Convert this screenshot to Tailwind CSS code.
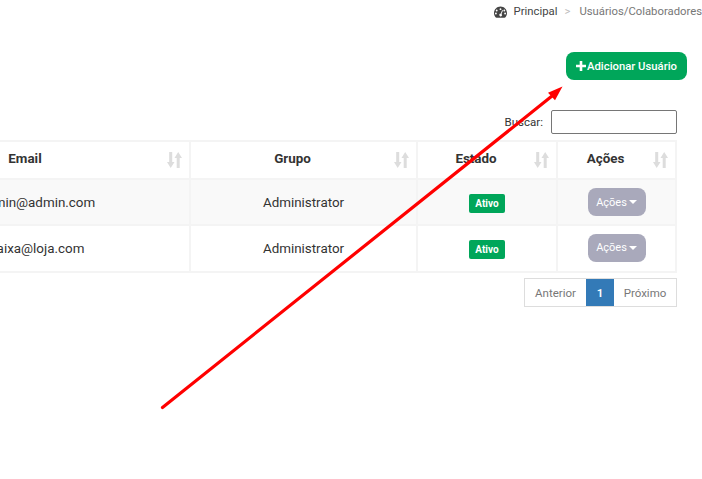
<!DOCTYPE html>
<html lang="en">
<head>
  <meta charset="UTF-8" />
  <title>Usuários/Colaboradores</title>
  <script src="https://cdn.jsdelivr.net/npm/@tailwindcss/browser@4"></script>
</head>
<body class="relative bg-white h-[479px] w-[702px] overflow-hidden font-['Roboto',sans-serif] text-[#333]">

  <!-- breadcrumb -->
  <div class="flex items-center justify-end h-6 text-[11.300px] leading-6 text-[#444] whitespace-nowrap">
    <svg class="w-[13px] h-[12px] mr-[7px] text-[#444]" viewBox="0 0 24 22" fill="currentColor"><path fill-rule="evenodd" d="M12 1C5.4 1 0 6.3 0 13c0 3 1 5.6 2.8 7.7.5.5 1 .8 1.7.8h15c.7 0 1.300-.3 1.700-.8C23 18.600 24 16 24 13 24 6.300 18.600 1 12 1zM12 4a1.700 1.700 0 110 3.400A1.700 1.700 0 0112 4zM5 6.500a1.700 1.700 0 110 3.400 1.700 1.700 0 010-3.400zm14 0a1.700 1.700 0 110 3.400 1.700 1.700 0 010-3.400zM3.500 12a1.700 1.700 0 110 3.400 1.700 1.700 0 010-3.400zm17 0a1.700 1.700 0 110 3.400 1.700 1.700 0 010-3.400zM15 7.500l1.500.6-2.600 6.500a2.500 2.500 0 11-1.500-.6L15 7.500z"/></svg>
    <span>Principal</span>
    <span class="ml-[7px] mr-[9px] text-[#bbb]">&gt;</span>
    <span class="text-[#777]">Usuários/Colaboradores</span>
  </div>

  <!-- add button -->
  <div class="flex justify-end pr-[15px] mt-[28px]">
    <button class="flex items-center justify-center gap-[1px] w-[121px] h-[28px] rounded-lg bg-[#00a65a] text-white text-[11.300px] font-medium">
      <svg class="w-[10px] h-[10px]" viewBox="0 0 10 10" fill="currentColor"><path d="M3.700 0h2.600v3.700H10v2.600H6.300V10H3.700V6.300H0V3.700h3.700z"/></svg>
      <span class="pt-[2px]">Adicionar Usuário</span>
    </button>
  </div>

  <!-- search -->
  <div class="flex justify-end items-center pr-[25px] mt-[30px] text-[11.500px]">
    <label class="mr-2 mt-[2px]">Buscar:</label>
    <input type="text" class="w-[126px] h-[24px] bg-white border border-[#767676] rounded-[2px]" />
  </div>

  <!-- table -->
  <div class="flex justify-end pr-[25px] mt-[6px]">
    <table class="shrink-0 table-fixed border-collapse border-2 border-[#f4f4f4] w-[792px] text-[13.400px] text-center">
      <colgroup>
        <col class="w-[306px]" /><col class="w-[227px]" /><col class="w-[140px]" /><col class="w-[119px]" />
      </colgroup>
      <thead>
        <tr class="h-[38px] font-semibold">
          <th class="relative border-2 border-[#f4f4f4] pr-[24px] pb-[1px]">Email
            <svg class="absolute right-[7px] top-[10px] w-[15px] h-[16px] text-[#ddd]" viewBox="0 0 15 16" fill="currentColor"><path d="M2.200 0h3v10H7.500L3.700 16 0 10h2.200zM9.700 16h3V6H15L11.200 0 7.500 6h2.200z"/></svg>
          </th>
          <th class="relative border-2 border-[#f4f4f4] pr-[22px] pb-[1px]">Grupo
            <svg class="absolute right-[7px] top-[10px] w-[15px] h-[16px] text-[#ddd]" viewBox="0 0 15 16" fill="currentColor"><path d="M2.200 0h3v10H7.500L3.700 16 0 10h2.200zM9.700 16h3V6H15L11.200 0 7.500 6h2.200z"/></svg>
          </th>
          <th class="relative border-2 border-[#f4f4f4] pr-[22px] pb-[1px]">Estado
            <svg class="absolute right-[7px] top-[10px] w-[15px] h-[16px] text-[#ddd]" viewBox="0 0 15 16" fill="currentColor"><path d="M2.200 0h3v10H7.500L3.700 16 0 10h2.200zM9.700 16h3V6H15L11.200 0 7.500 6h2.200z"/></svg>
          </th>
          <th class="relative border-2 border-[#f4f4f4] pr-[22px] pb-[1px]">Ações
            <svg class="absolute right-[7px] top-[10px] w-[15px] h-[16px] text-[#ddd]" viewBox="0 0 15 16" fill="currentColor"><path d="M2.200 0h3v10H7.500L3.700 16 0 10h2.200zM9.700 16h3V6H15L11.200 0 7.500 6h2.200z"/></svg>
          </th>
        </tr>
      </thead>
      <tbody>
        <tr class="h-[46px] bg-[#f9f9f9]">
          <td class="border-2 border-[#f4f4f4] pt-[2px] whitespace-nowrap">admin@admin.com</td>
          <td class="border-2 border-[#f4f4f4] pt-[2px]">Administrator</td>
          <td class="border-2 border-[#f4f4f4] pt-[2px]"><span class="inline-block w-[36px] h-[19px] leading-[19px] rounded-[2px] bg-[#00a65a] text-white text-[10px] font-bold">Ativo</span></td>
          <td class="border-2 border-[#f4f4f4]">
            <button class="inline-flex items-center justify-center gap-[2px] w-[58px] h-[28px] rounded-lg bg-[#a9a9bb] text-white text-[11px]"><span class="pt-[2px]">Ações</span><span class="w-0 h-0 border-x-[4px] border-x-transparent border-t-[4px] border-t-white"></span></button>
          </td>
        </tr>
        <tr class="h-[47px] bg-white">
          <td class="border-2 border-[#f4f4f4] pt-[2px] whitespace-nowrap">caixa@loja.com</td>
          <td class="border-2 border-[#f4f4f4] pt-[2px]">Administrator</td>
          <td class="border-2 border-[#f4f4f4] pt-[2px]"><span class="inline-block w-[36px] h-[19px] leading-[19px] rounded-[2px] bg-[#00a65a] text-white text-[10px] font-bold">Ativo</span></td>
          <td class="border-2 border-[#f4f4f4] pb-[2px]">
            <button class="inline-flex items-center justify-center gap-[2px] w-[58px] h-[28px] rounded-lg bg-[#a9a9bb] text-white text-[11px]"><span class="pt-[2px]">Ações</span><span class="w-0 h-0 border-x-[4px] border-x-transparent border-t-[4px] border-t-white"></span></button>
          </td>
        </tr>
      </tbody>
    </table>
  </div>

  <!-- pagination -->
  <div class="flex justify-end pr-[25px] mt-[5px] text-[11.500px] text-[#777]">
    <div class="flex h-[29px] border border-[#ddd]">
      <span class="w-[61px] pt-[2px] flex items-center justify-center">Anterior</span>
      <span class="w-[28px] pt-[2px] flex items-center justify-center bg-[#337ab7] text-white font-semibold">1</span>
      <span class="w-[62px] pt-[2px] flex items-center justify-center">Próximo</span>
    </div>
  </div>

  <!-- red arrow annotation -->
  <svg class="absolute left-0 top-0 w-[702px] h-[479px] pointer-events-none" viewBox="0 0 702 479">
    <line x1="162.500" y1="407.500" x2="552" y2="96" stroke="#f00" stroke-width="3.200" stroke-linecap="round" />
    <polygon points="562.500,86.500 548,92.700 555,100.300" fill="#f00" />
  </svg>
</body>
</html>
